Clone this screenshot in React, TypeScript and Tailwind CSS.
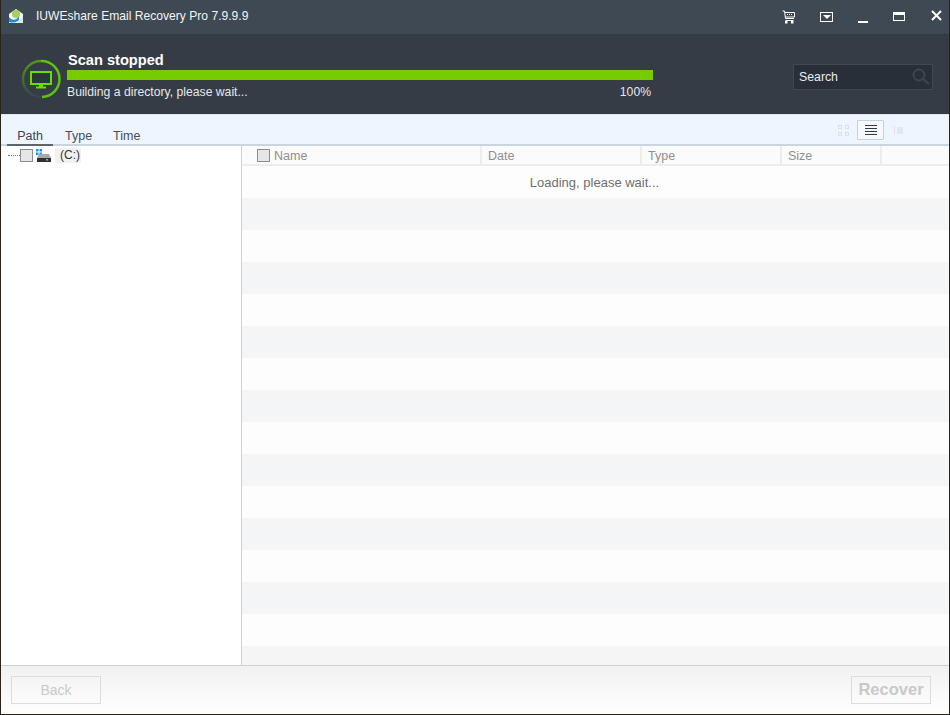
const rows = Array.from({ length: 16 }, (_, i) => i)

const columns = [
  { label: "Date", width: "w-[160px]" },
  { label: "Type", width: "w-[140px]" },
  { label: "Size", width: "w-[100px]" },
]

const CartIcon = () => (
  <svg width="14" height="14" viewBox="0 0 14 14" fill="none" stroke="white" strokeWidth="1">
    <path d="M0.5 1 L2.5 1 L3.5 8.5 L12 8.5" />
    <path d="M3 2.5 H12.5 V7 H3.5" />
    <path d="M5 4.5 H6 M7 4.5 H8 M9 4.5 H10" />
    <path d="M3.5 10.5 H11.5" />
    <rect x="3.5" y="11.5" width="1.5" height="1.5" fill="white" />
    <rect x="9.5" y="11.5" width="1.5" height="1.5" fill="white" />
  </svg>
)

const MonitorIcon = () => (
  <svg width="40" height="40" viewBox="0 0 40 40" fill="none">
    <defs>
      <linearGradient id="ring" x1="0" y1="0" x2="0" y2="1">
        <stop offset="0" stopColor="#4f9a14" />
        <stop offset="1" stopColor="#3a434b" />
      </linearGradient>
    </defs>
    <path d="M20 2 A18 18 0 0 0 20 38" stroke="url(#ring)" strokeWidth="2.5" />
    <path d="M20 2 A18 18 0 0 1 21 38" stroke="#5cc40a" strokeWidth="2.5" />
    <rect x="10" y="13" width="20" height="12" fill="#2c3640" stroke="#66e000" strokeWidth="2" />
    <path d="M18 26 H22 V27.5 H25 V29.5 H15 V27.5 H18 Z" fill="#66e000" />
  </svg>
)

const MailLogo = () => (
  <svg width="16" height="16" viewBox="0 0 16 16">
    <path d="M1 6 L8 1 L15 6 V15 H1 Z" fill="#f4f7f5" />
    <circle cx="8" cy="6" r="4" fill="#a5cf5f" />
    <path d="M1 9 C5 14 9 11 11 8.5 L11 12 C8 15 4 15 1 14 Z" fill="#1f8fd6" />
    <path d="M15 8 V15 H9 Z" fill="#dfe8ec" />
  </svg>
)

const DriveIcon = () => (
  <svg width="15" height="14" viewBox="0 0 15 14">
    <rect x="0" y="0" width="2.5" height="2.5" fill="#1296e8" />
    <rect x="3.5" y="0" width="2.5" height="2.5" fill="#1296e8" />
    <rect x="0" y="3.5" width="2.5" height="2.5" fill="#1296e8" />
    <rect x="3.5" y="3.5" width="2.5" height="2.5" fill="#1296e8" />
    <path d="M3 5 H13 L15 9 H1 Z" fill="#a8a8a8" />
    <rect x="1" y="9" width="14" height="4" fill="#303030" />
    <rect x="10" y="10" width="2" height="1.5" fill="#5fd35f" />
  </svg>
)

const Checkbox = () => (
  <div className="w-[13px] h-[13px] border border-[#8c8c8c] bg-[#e6e6e6] shrink-0" />
)

export default function App() {
  return (
    <div className="w-[950px] h-[715px] flex flex-col bg-white border-x border-b border-[#2b2416] font-['Liberation_Sans',Arial,sans-serif] overflow-hidden">
      {/* title bar */}
      <div className="h-[34px] shrink-0 flex items-center bg-[#3f4953] text-[12.1px] text-[#f2f4f5]">
        <div className="ml-[7px] mr-[12px] mb-[3px]"><MailLogo /></div>
        <span className="mb-[2px]">IUWEshare Email Recovery Pro 7.9.9.9</span>
        <div className="ml-auto flex items-center h-full">
          <div className="mr-[24px] mb-[1px]"><CartIcon /></div>
          <div className="w-[13px] h-[10px] border border-white flex items-center justify-center mr-[25px] mb-[1px]">
            <div className="w-0 h-0 border-x-[4px] border-x-transparent border-t-[4px] border-t-white" />
          </div>
          <div className="w-[10px] h-[2px] bg-white mr-[25px] mt-[9px]" />
          <div className="w-[12px] h-[9px] border border-white border-t-[3px] mr-[26px] mb-[1px]" />
          <svg width="11" height="11" viewBox="0 0 11 11" className="mr-[7px] mb-[3px]">
            <path d="M1 1 L10 10 M10 1 L1 10" stroke="white" strokeWidth="2" />
          </svg>
        </div>
      </div>

      {/* scan header */}
      <div className="h-[80px] shrink-0 flex bg-[#353c46] text-white">
        <div className="ml-[20px] mt-[25px] mr-[6px]"><MonitorIcon /></div>
        <div className="w-[586px] pt-[17px]">
          <div className="ml-[1px] text-[14.6px] leading-[18px] font-bold">Scan stopped</div>
          <div className="h-[10px] mt-[1px] bg-[#77cc00]" />
          <div className="flex justify-between mt-[5px] text-[12.2px] leading-[14px] text-[#e6e8ea]">
            <span>Building a directory, please wait...</span>
            <span className="mr-[2px]">100%</span>
          </div>
        </div>
        <div className="ml-[140px] mt-[30px] w-[140px] h-[26px] flex items-center justify-between border border-[#3f4853] bg-[#292f38] pl-[5px] pr-[2px] text-[12.3px] text-[#e6eef5]">
          <span>Search</span>
          <svg width="18" height="18" viewBox="0 0 18 18" fill="none" stroke="#3d4550" strokeWidth="2">
            <circle cx="7" cy="7" r="5.5" />
            <path d="M11 11 L17 16" />
          </svg>
        </div>
      </div>

      {/* tabs */}
      <div className="h-[32px] shrink-0 flex items-end justify-between border-t border-[#dfe6ee] border-b-2 border-b-[#c9d6e2] bg-[#eef5fe] text-[12.5px] text-[#4a4f57]">
        <div className="flex">
          <div className="ml-[6px] w-[46px] h-[19px] text-center border-b-2 border-[#5d6670] -mb-[2px] text-[#3d4450]">Path</div>
          <div className="ml-[12px] h-[17px]">Type</div>
          <div className="ml-[21px] h-[17px]">Time</div>
        </div>
        <div className="flex items-center h-full mr-[46px] pt-[1px]">
          <div className="grid grid-cols-2 gap-[3px] mr-[8px]">
            <div className="w-[4px] h-[4px] border border-[#dcdfe3]" />
            <div className="w-[4px] h-[4px] border border-[#dcdfe3]" />
            <div className="w-[4px] h-[4px] border border-[#dcdfe3]" />
            <div className="w-[4px] h-[4px] border border-[#dcdfe3]" />
          </div>
          <div className="w-[27px] h-[20px] flex flex-col items-center justify-center gap-[2px] border border-[#c5d2de] bg-[#f6f9fc] rounded-[1px]">
            <div className="w-[12px] h-[1px] bg-[#2e3848]" />
            <div className="w-[12px] h-[1px] bg-[#2e3848]" />
            <div className="w-[12px] h-[1px] bg-[#2e3848]" />
            <div className="w-[12px] h-[1px] bg-[#2e3848]" />
          </div>
          <div className="w-[1px] h-[9px] bg-[#e0e4ea] ml-[10px] mr-[2px]" />
          <div className="w-[6px] h-[7px] bg-[#e2e6ee]" />
        </div>
      </div>

      {/* body */}
      <div className="flex-1 min-h-0 flex">
        <div className="w-[241px] shrink-0 border-r border-[#d0d0d0] bg-white">
          <div className="flex items-center h-[18px] text-[12px] text-[#333]">
            <div className="ml-[7px] w-[12px] border-t border-dotted border-[#777]" />
            <Checkbox />
            <div className="ml-[3px] mt-[2px]"><DriveIcon /></div>
            <div className="ml-[4px] w-[26px] pl-[5px] bg-[#f1f1f1] h-[15px] leading-[15px]">(C:)</div>
          </div>
        </div>
        <div className="flex-1 min-w-0 flex flex-col">
          <div className="h-[20px] shrink-0 flex bg-[#fbfbfb] border-b-2 border-[#ededed] text-[12.5px] text-[#8f8f8f]">
            <div className="w-[240px] flex items-center border-r-2 border-[#ededed] pl-[15px]">
              <Checkbox />
              <span className="ml-[4px] pt-[2px]">Name</span>
            </div>
            {columns.map(col => (
              <div key={col.label} className={`${col.width} flex items-center border-r-2 border-[#ededed] pl-[6px] pt-[2px]`}>
                {col.label}
              </div>
            ))}
          </div>
          <div className="flex-1 min-h-0 overflow-hidden">
            {rows.map(i => (
              <div key={i} className={i % 2 === 0 ? "h-[32px] bg-[#fdfdfd] flex items-center justify-center text-[13px] text-[#6f6f6f]" : "h-[32px] bg-[#f4f5f7]"}>
                {i === 0 && <span className="mr-[2px] pt-[1px]">Loading, please wait...</span>}
              </div>
            ))}
          </div>
        </div>
      </div>

      {/* footer */}
      <div className="h-[49px] shrink-0 flex items-center justify-between border-t border-[#d0d0d0] bg-gradient-to-b from-[#f1f1f1] to-white pl-[10px] pr-[18px]">
        <button className="w-[90px] h-[28px] border border-[#dcdcdc] text-[14px] text-[#c9cacc]">Back</button>
        <button className="w-[80px] h-[28px] border border-[#dcdcdc] text-[16.5px] leading-[24px] pb-[2px] font-bold text-[#c9c9c9]">Recover</button>
      </div>
    </div>
  )
}
